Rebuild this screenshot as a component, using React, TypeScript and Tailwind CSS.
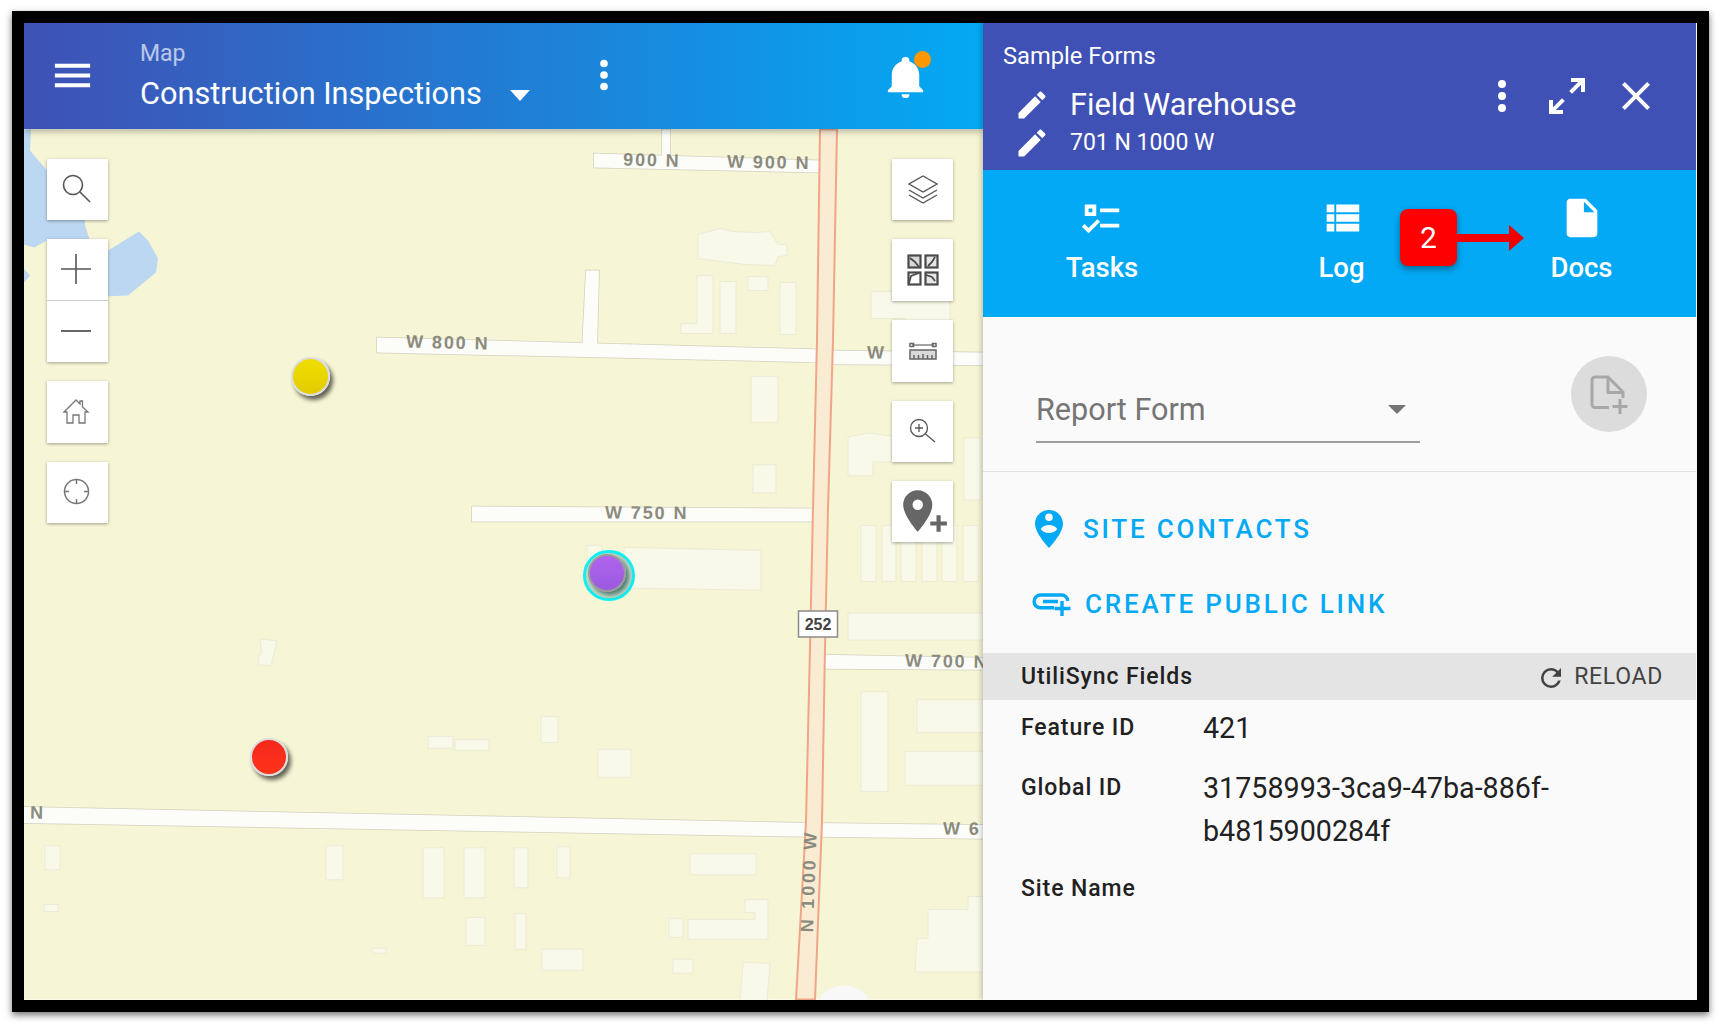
import React from "react";

const P = {
  menu: "M3,6H21V8H3V6M3,11H21V13H3V11M3,16H21V18H3V16Z",
  dots: "M12,16A2,2 0 0,1 14,18A2,2 0 0,1 12,20A2,2 0 0,1 10,18A2,2 0 0,1 12,16M12,10A2,2 0 0,1 14,12A2,2 0 0,1 12,14A2,2 0 0,1 10,12A2,2 0 0,1 12,10M12,4A2,2 0 0,1 14,6A2,2 0 0,1 12,8A2,2 0 0,1 10,6A2,2 0 0,1 12,4Z",
  bell: "M21,19V20H3V19L5,17V11C5,7.9 7.03,5.17 10,4.29C10,4.19 10,4.1 10,4A2,2 0 0,1 12,2A2,2 0 0,1 14,4C14,4.1 14,4.19 14,4.29C16.97,5.17 19,7.9 19,11V17L21,19M14,21A2,2 0 0,1 12,23A2,2 0 0,1 10,21",
  pencil: "M20.71,7.04C21.1,6.65 21.1,6 20.71,5.63L18.37,3.29C18,2.9 17.35,2.9 16.96,3.29L15.12,5.12L18.87,8.87M3,17.25V21H6.75L17.81,9.93L14.06,6.18L3,17.25Z",
  expand: "M10,21V19H6.41L10.91,14.5L9.5,13.09L5,17.59V14H3V21H10M14.5,10.91L19,6.41V10H21V3H14V5H17.59L13.09,9.5L14.5,10.91Z",
  close: "M19,6.41L17.59,5L12,10.59L6.41,5L5,6.41L10.59,12L5,17.59L6.41,19L12,13.41L17.59,19L19,17.59L13.41,12L19,6.41Z",
  tasks: "M3,5H9V11H3V5M5,7V9H7V7H5M11,7H21V9H11V7M11,15H21V17H11V15M5,20L1.5,16.5L2.91,15.09L5,17.17L9.59,12.59L11,14L5,20Z",
  log: "M9,5V9H21V5M9,19H21V15H9M9,14H21V10H9M4,9H8V5H4M4,19H8V15H4M4,14H8V10H4V14Z",
  file: "M13,9V3.5L18.5,9M6,2C4.89,2 4,2.89 4,4V20A2,2 0 0,0 6,22H18A2,2 0 0,0 20,20V8L14,2H6Z",
  refresh: "M17.65,6.35C16.2,4.9 14.21,4 12,4A8,8 0 0,0 4,12A8,8 0 0,0 12,20C15.73,20 18.84,17.45 19.73,14H17.65C16.83,16.33 14.61,18 12,18A6,6 0 0,1 6,12A6,6 0 0,1 12,6C13.66,6 15.14,6.69 16.22,7.78L13,11H20V4L17.65,6.35Z",
  pinPlus: "M9,11.5A2.5,2.5 0 0,0 11.5,9A2.5,2.5 0 0,0 9,6.5A2.5,2.5 0 0,0 6.5,9A2.5,2.5 0 0,0 9,11.5M9,2C12.86,2 16,5.13 16,9C16,14.25 9,22 9,22C9,22 2,14.25 2,9A7,7 0 0,1 9,2M15,17H18V14H20V17H23V19H20V22H18V19H15V17Z",
};

function Mdi({ d, size, className = "" }: { d: string; size: number; className?: string }) {
  return (
    <svg viewBox="0 0 24 24" width={size} height={size} fill="currentColor" className={"shrink-0 " + className}>
      <path d={d} />
    </svg>
  );
}

function Thin({ w, h, vb, children }: { w: number; h: number; vb: string; children: React.ReactNode }) {
  return (
    <svg viewBox={vb} width={w} height={h} fill="none" stroke="#555" strokeWidth="1" className="shrink-0">
      {children}
    </svg>
  );
}

function Ctl({ h, cls = "", children }: { h: string; cls?: string; children: React.ReactNode }) {
  return <div className={"w-[61px] bg-white flex items-center justify-center shadow-[0_1px_3px_rgba(0,0,0,0.35)] " + h + " " + cls}>{children}</div>;
}

const fy = (y: number) => (y > 340 ? 340 + (y - 340) * 0.9947 : y);

const buildings: [number, number, number, number][] = [
  [720, 281, 16, 52], [748, 276, 20, 14], [780, 282, 16, 52], [751, 376, 27, 46], [753, 465, 23, 28],
  [964, 438, 17, 62], [861, 526, 15, 56], [882, 526, 14, 56], [901, 526, 15, 56], [922, 526, 15, 56],
  [942, 526, 15, 56], [963, 526, 15, 56], [587, 546, 15, 20], [848, 614, 135, 27], [861, 693, 27, 100],
  [917, 701, 66, 33], [905, 753, 78, 34], [541, 718, 17, 26], [598, 751, 33, 28], [428, 738, 25, 12],
  [455, 741, 34, 11], [45, 848, 15, 24], [326, 848, 17, 34], [423, 850, 21, 50], [464, 850, 21, 50],
  [514, 850, 14, 40], [557, 849, 13, 31], [466, 920, 19, 28], [515, 916, 11, 36], [44, 907, 14, 7],
  [372, 951, 14, 5], [542, 952, 41, 21], [690, 856, 66, 21], [669, 921, 14, 19], [673, 962, 20, 14],
];

const polys = [
  "698,234 720,228 733,231 755,232 770,231 778,244 787,244 787,255 778,256 775,265 745,264 698,258",
  "697,275 713,275 713,333 681,333 681,323 697,323",
  "871,291 950,291 950,340 905,340 905,318 871,318",
  "848,437 868,433 892,436 892,462 873,462 873,476 848,476",
  "624,548 761,551 761,591 624,589",
  "260,640 277,642 271,667 258,666 259,656 262,655",
  "745,902 768,902 768,942 688,942 688,922 755,922 755,915 745,915",
  "743,965 770,966 767,1005 740,1005",
  "968,899 983,899 983,975 915,975 917,941 928,941 928,912 968,912",
];

const fixPts = (s: string) =>
  s.split(" ").map((p) => {
    const [x, y] = p.split(",").map(Number);
    return x + "," + fy(y);
  }).join(" ");

const roads = [
  "662,129 670,129 670,156 662,156",
  "594,153 822,160 822,172 594,167",
  "586,270 599,270 597,350 582,350",
  "377,337 822,349 822,362 377,352",
  "825,350 983,352 983,365 825,364",
  "472,507 818,509 818,522 472,522",
  "823,656 983,659 983,671 823,670",
  "24,809 810,825 810,839 24,825",
  "815,825 983,827 983,841 815,839",
].map(fixPts);

function Label({ x, y, t, r = 1, sp = 1.9 }: { x: number; y: number; t: string; r?: number; sp?: number }) {
  return (
    <text x={x} y={y} transform={`rotate(${r} ${x} ${y})`} fontFamily="'Liberation Sans', sans-serif" fontWeight="700" fontSize="18" letterSpacing={sp} fill="#8b8b7d">
      {t}
    </text>
  );
}

function MapArt() {
  return (
    <svg viewBox="24 129 959 870" className="absolute inset-0 w-full h-full">
      <rect x="24" y="129" width="959" height="870" fill="#f6f5d5" />
      <g fill="#bcd7f2">
        <polygon points="24,129 31,129 30,150 47,170 85,200 85,225 90,240 47,240 34,247 24,244" />
        <polygon points="100,255 139,231 148,240 158,258 156,272 128,295 100,296" />
        <polygon points="24,268 30,275 24,282" />
      </g>
      <g fill="#f9f9e9" stroke="#ecebd6" strokeWidth="1">
        {buildings.map((b, i) => (
          <rect key={i} x={b[0]} y={fy(b[1])} width={b[2]} height={b[3]} />
        ))}
        {polys.map((p, i) => (
          <polygon key={i} points={fixPts(p)} />
        ))}
      </g>
      <g fill="#fcfcf8" stroke="#d3d2bf" strokeWidth="1.5">
        {roads.map((p, i) => <polygon key={i} points={p} />)}
      </g>
      <g fill="#fcfcf8">
        {roads.map((p, i) => <polygon key={i} points={p} />)}
      </g>
      <polygon
        points="820,129 817,340 813,508 810,647 806,821 796,999 815,999 822,821 825,647 828,508 833,340 837,129"
        fill="#faebd3" stroke="#f1a587" strokeWidth="2"
      />
      <Label x={623} y={165} t="900 N" r={1.5} />
      <Label x={727} y={167} t="W 900 N" r={1} />
      <Label x={406} y={347} t="W 800 N" r={1.5} />
      <Label x={867} y={358} t="W" r={0.5} />
      <Label x={605} y={518} t="W 750 N" r={0.5} />
      <Label x={905} y={666} t="W 700 N" r={1} />
      <Label x={943} y={834} t="W 6" r={0.5} />
      <Label x={30} y={818} t="N" r={1} />
      <Label x={813} y={932} t="N 1000 W" r={-88} sp={2.8} />
      <rect x="798.5" y="610.5" width="39" height="26" fill="#fff" stroke="#8a8a8a" strokeWidth="1.5" />
      <text x="818" y="629" textAnchor="middle" fontFamily="'Liberation Sans', sans-serif" fontWeight="700" fontSize="16" fill="#444">252</text>
      <ellipse cx="844" cy="1010" rx="28" ry="25" fill="#f8f8f8" />
    </svg>
  );
}

export default function App() {
  return (
    <div className="w-[1729px] h-[1029px] bg-white pl-3 pt-[11px] font-['Roboto',sans-serif] overflow-hidden">
      <div className="w-[1697px] h-[1001px] border-[12px] border-black flex shadow-[0_3px_7px_rgba(0,0,0,0.55)] bg-white">
        {/* left */}
        <div className="w-[959px] flex flex-col">
          <header className="relative z-10 h-[106px] shrink-0 flex items-center bg-[linear-gradient(to_right,#3f51b5,#03a9f4)] text-white pl-[25px] shadow-[0_3px_6px_rgba(0,0,0,0.25)]">
            <Mdi d={P.menu} size={47} className="mt-[-2px]" />
            <div className="ml-[44px] w-[431px] flex flex-col">
              <div className="text-[23px] leading-[30px] text-white/65 mt-[1px]">Map</div>
              <div className="flex items-center mt-[5px]">
                <span className="text-[30.700px] leading-[40px] font-normal">Construction Inspections</span>
                <span className="ml-[28px] mt-[2px] w-0 h-0 border-l-[10px] border-r-[10px] border-t-[11px] border-l-transparent border-r-transparent border-t-white" />
              </div>
            </div>
            <Mdi d={P.dots} size={46} className="ml-[10px] mt-[-2px]" />
            <div className="relative ml-auto mr-[54px]">
              <Mdi d={P.bell} size={47} />
              <span className="absolute left-[32px] top-[-2px] w-[17px] h-[17px] rounded-full bg-[#ff9800]" />
            </div>
          </header>
          <div className="relative flex-1 overflow-hidden">
            <MapArt />
            <div className="absolute left-[23px] top-[30px] flex flex-col gap-[19px]">
              <Ctl h="h-[61px]" cls="pr-[4px] pb-[3px]">
                <Thin w={30} h={30} vb="0 0 30 30"><g strokeWidth="1.6"><circle cx="12" cy="12" r="9.5" /><path d="M19 19l10 10" /></g></Thin>
              </Ctl>
              <div className="flex flex-col shadow-[0_1px_3px_rgba(0,0,0,0.35)]">
                <div className="w-[61px] h-[62px] bg-white border-b border-[#ccc] flex items-center justify-center pr-[4px] pb-[2px]">
                  <Thin w={30} h={30} vb="0 0 30 30"><path d="M15 0v30M0 15h30" strokeWidth="1.6" /></Thin>
                </div>
                <div className="w-[61px] h-[61px] bg-white flex items-center justify-center pr-[4px] pb-[2px]">
                  <Thin w={30} h={4} vb="0 0 30 4"><path d="M0 2h30" strokeWidth="1.8" /></Thin>
                </div>
              </div>
              <Ctl h="h-[62px]" cls="pr-[3px]">
                <Thin w={28} h={28} vb="0 0 28 28"><path d="M2 14 14 2l4 4V3h2.500v6L26 14h-3v11h-6v-8h-6v8H5V14z" stroke="#777" strokeWidth="1.3" /></Thin>
              </Ctl>
              <Ctl h="h-[61px]" cls="pr-[3px] pb-[2px]">
                <Thin w={27} h={27} vb="0 0 27 27"><g stroke="#777" strokeWidth="1.5"><circle cx="13.5" cy="13.5" r="12" /><path d="M13.500 1v5M13.500 21v5M1 13.500h5M21 13.500h5" /></g></Thin>
              </Ctl>
            </div>
            <div className="absolute right-[30px] top-[30px] flex flex-col gap-[19px]">
              <Ctl h="h-[61px]">
                <Thin w={30} h={29} vb="0 0 30 29"><g stroke="#555" strokeWidth="1.4"><path d="M15 1 29 9 15 17 1 9z" /><path d="M1 15l14 8 14-8M1 20l14 8 14-8" /></g></Thin>
              </Ctl>
              <Ctl h="h-[62px]">
                <Thin w={32} h={32} vb="0 0 32 32">
                  <g stroke="#4a4a4a" strokeWidth="2.200">
                    <rect x="1.500" y="1.500" width="12" height="12" fill="#d8d8d8" /><rect x="18.500" y="1.500" width="12" height="12" fill="#e6e6e6" />
                    <rect x="1.500" y="18.500" width="12" height="12" /><rect x="18.500" y="18.500" width="12" height="12" fill="#e6e6e6" />
                    <path d="M3 4l5 4 4 5M21 12l4-4 3-5M2 29l2-7 8-3M19 21l6 2 3 4" strokeWidth="1.800" />
                  </g>
                </Thin>
              </Ctl>
              <Ctl h="h-[62px]">
                <Thin w={28} h={18} vb="0 0 28 18"><g stroke="#666" strokeWidth="1.500"><path d="M3 3h22" strokeWidth="1.200" /><rect x="1" y="1.500" width="3.500" height="3" /><rect x="23.500" y="1.500" width="3.500" height="3" /><rect x="1" y="8" width="26" height="9" fill="#d9d9d9" /><path d="M5 17v-4M9.500 17v-4M14 17v-5M18.500 17v-4M23 17v-4" /></g></Thin>
              </Ctl>
              <Ctl h="h-[61px]" cls="pb-[3px]">
                <Thin w={27} h={25} vb="0 0 27 25"><g stroke="#555" strokeWidth="1.3"><circle cx="10" cy="10" r="8.500" /><path d="M10 6v8M6 10h8M16.500 16 26 24" /></g></Thin>
              </Ctl>
              <Ctl h="h-[61px]">
                <svg viewBox="0 0 24 24" width="50" height="50" fill="#666" className="ml-[2px] mt-[-2px]"><path d={P.pinPlus} /></svg>
              </Ctl>
            </div>
            {/* markers */}
            <div className="absolute left-[267px] top-[228px] w-[39px] h-[39px] rounded-full border-2 border-[#ddd] bg-gradient-to-b from-[#f0de00] to-[#e2cc00] shadow-[3px_4px_4px_rgba(0,0,0,0.6)]" />
            <div className="absolute left-[226px] top-[609px] w-[38px] h-[38px] rounded-full border-2 border-[#ddd] bg-gradient-to-b from-[#f5281e] to-[#ff3318] shadow-[3px_4px_4px_rgba(0,0,0,0.6)]" />
            <div className="absolute left-[559px] top-[421px] w-[52px] h-[51px] rounded-full border-[3px] border-[#13eef2] bg-[#9fc4b8]/60">
              <div className="ml-[2px] mt-[1px] w-[38px] h-[38px] rounded-full border-2 border-[#9a9a9a] bg-gradient-to-b from-[#b163ee] to-[#9a5ae0] shadow-[3px_3px_4px_rgba(0,60,60,0.6)]" />
            </div>
          </div>
        </div>
        {/* right */}
        <div className="relative z-20 w-[713px] flex flex-col bg-[#fafafa] shadow-[-2px_0_5px_rgba(0,0,0,0.2)]">
          <div className="h-[147px] shrink-0 bg-[#3f51b5] text-white flex justify-between">
            <div className="pl-[20px] pt-[17px]">
              <div className="text-[23.700px] leading-[32px]">Sample Forms</div>
              <div className="flex items-center mt-[13px] h-[40px]">
                <Mdi d={P.pencil} size={36} className="ml-[11px] mr-[20px]" />
                <span className="text-[30.700px] leading-[40px]">Field Warehouse</span>
              </div>
              <div className="flex items-center h-[36px]">
                <Mdi d={P.pencil} size={36} className="ml-[11px] mr-[20px]" />
                <span className="text-[23px] leading-[36px]">701 N 1000 W</span>
              </div>
            </div>
            <div className="flex pt-[49px] pr-[36px] items-start">
              <Mdi d={P.dots} size={48} />
              <Mdi d={P.expand} size={48} className="ml-[17px]" />
              <Mdi d={P.close} size={48} className="ml-[21px]" />
            </div>
          </div>
          <div className="relative h-[147px] shrink-0 bg-[#03a9f4] text-white grid grid-cols-[238px_241px_234px]">
            {[["Tasks", P.tasks, ""], ["Log", P.log, ""], ["Docs", P.file, "pl-[5px]"]].map(([t, d, c]) => (
              <div key={t} className={"flex flex-col items-center pt-[25px] " + c}>
                <Mdi d={d} size={46} />
                <div className="mt-[11px] text-[27.500px] leading-[32px] font-medium">{t}</div>
              </div>
            ))}
            <div className="absolute left-[417px] top-[39px] w-[57px] h-[57px] rounded-[8px] bg-[#ff0000] text-white text-[30px] flex items-center justify-center shadow-[0_3px_6px_rgba(0,0,0,0.4)]">2</div>
            <svg className="absolute left-[474px] top-[55px]" width="67" height="26" viewBox="0 0 67 26">
              <path d="M0 9h52V0l15 13-15 13v-9H0z" fill="#f00000" />
            </svg>
          </div>
          <div className="h-[155px] shrink-0 flex items-start pl-[53px] border-b border-[#e0e0e0]">
            <div className="mt-[53px] w-[384px] h-[73px] pt-[8px] border-b-2 border-[#9e9e9e] flex items-center justify-between pr-[14px]">
              <span className="text-[30.600px] text-[#757575]">Report Form</span>
              <span className="w-0 h-0 border-l-[9px] border-r-[9px] border-t-[9px] border-l-transparent border-r-transparent border-t-[#757575]" />
            </div>
            <div className="ml-[151px] mt-[39px] w-[76px] h-[76px] rounded-full bg-[#dcdcdc] flex items-center justify-center">
              <svg viewBox="0 0 38 39" width="38" height="39" fill="none" stroke="#a8a8a8" strokeWidth="3">
                <path d="M19 32.500H5a3 3 0 0 1-3-3V5a3 3 0 0 1 3-3h13l15 15v6" />
                <path d="M18 2v15.500h15" />
                <path d="M30 24v15M22.500 31.500h15" />
              </svg>
            </div>
          </div>
          <div className="flex flex-col pl-[49px] pt-[32px] text-[#03a9f4] font-medium tracking-[2.800px] text-[26px]">
            <div className="flex items-center h-[50px]">
              <svg viewBox="0 0 28 38" width="28" height="38" className="ml-[3px] shrink-0" fill="currentColor">
                <path fillRule="evenodd" d="M14 0C6.300 0 0 6.100 0 13.800 0 23.500 14 38 14 38s14-14.500 14-24.200C28 6.100 21.700 0 14 0zm0 3.500a3.800 3.800 0 1 1 0 7.600 3.800 3.800 0 0 1 0-7.600zM5.800 19c1.500-2.600 4.800-4 8.200-4s6.700 1.400 8.200 4c-1.500 2.600-4.800 4-8.200 4s-6.700-1.400-8.200-4z" />
              </svg>
              <span className="ml-[20px]">SITE CONTACTS</span>
            </div>
            <div className="flex items-center h-[50px] mt-[25px]">
              <svg viewBox="0 0 40 24" width="40" height="24" className="shrink-0" fill="none" stroke="currentColor" strokeWidth="3.400">
                <path d="M22 15.800H8.500a6.400 6.400 0 0 1 0-12.800h21a6.500 6.500 0 0 1 6.300 6" />
                <path d="M11 9.500h15M30 9v15M22.500 16.500h16" />
              </svg>
              <span className="ml-[13px]">CREATE PUBLIC LINK</span>
            </div>
          </div>
          <div className="mt-[24px] h-[47px] shrink-0 bg-[#e4e4e4] flex items-center justify-between pl-[38px] pr-[33px] pt-[2px]">
            <span className="text-[23px] font-medium text-[#212121] tracking-[0.9px]">UtiliSync Fields</span>
            <div className="flex items-center text-[#424242]">
              <Mdi d={P.refresh} size={30} className="ml-[-1px]" />
              <span className="ml-[8px] text-[23px] tracking-[0.7px]">RELOAD</span>
            </div>
          </div>
          <div className="pt-[7px] pl-[38px] pr-[80px] text-[#212121]">
            <div className="flex">
              <div className="w-[182px] shrink-0 text-[23px] leading-[42px] font-medium tracking-[0.9px]">Feature ID</div>
              <div className="text-[28.700px] leading-[43px]">421</div>
            </div>
            <div className="flex mt-[17px]">
              <div className="w-[182px] shrink-0 text-[23px] leading-[42px] font-medium tracking-[0.9px]">Global ID</div>
              <div className="text-[28.700px] leading-[43px]">31758993-3ca9-47ba-886f-b4815900284f</div>
            </div>
            <div className="mt-[14px] text-[23px] leading-[44px] font-medium tracking-[0.9px]">Site Name</div>
          </div>
        </div>
      </div>
    </div>
  );
}
